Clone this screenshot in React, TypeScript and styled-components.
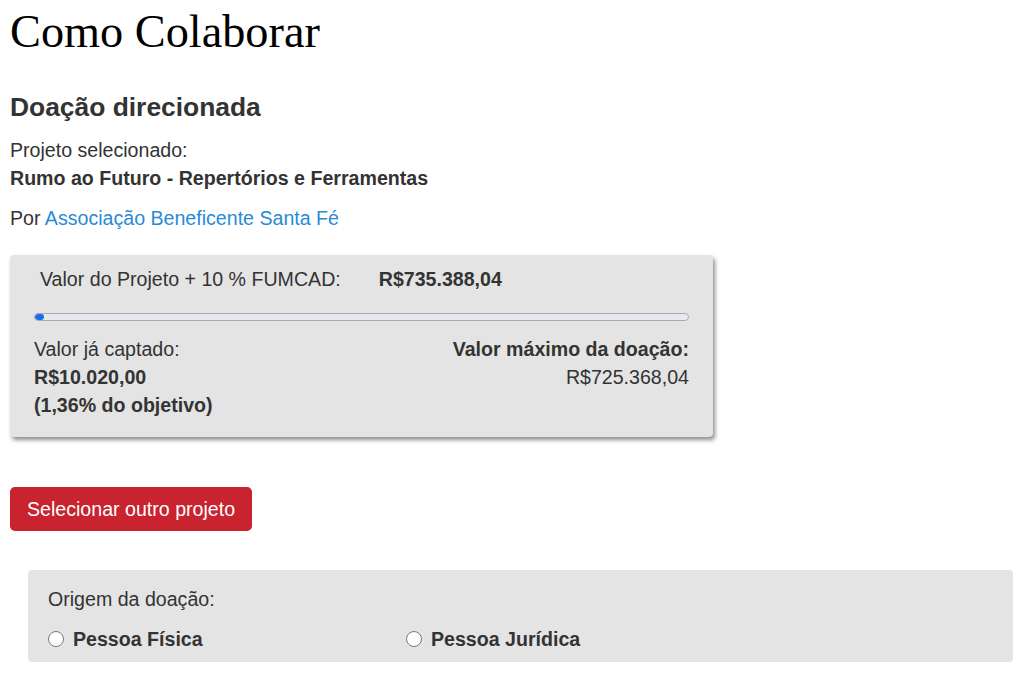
import styled, { createGlobalStyle } from "styled-components";

const GlobalStyle = createGlobalStyle`
  body {
    margin: 0;
    padding: 0 10px;
    background: #ffffff;
    font-family: "Liberation Sans", Arial, sans-serif;
    color: #333333;
  }
`;

const project = {
  name: "Rumo ao Futuro - Repertórios e Ferramentas",
  owner: "Associação Beneficente Santa Fé",
  total: "R$735.388,04",
  raised: "R$10.020,00",
  max: "R$725.368,04",
  percent: 1.36,
};

export default function App() {
  return (
    <>
      <GlobalStyle />
      <SCPage>
        <SCTitle>Como Colaborar</SCTitle>
        <SCSubtitle>Doação direcionada</SCSubtitle>
        <SCText>Projeto selecionado:</SCText>
        <SCText $bold>{project.name}</SCText>
        <SCOwner>
          Por <a href="#">{project.owner}</a>
        </SCOwner>

        <SCCard>
          <SCTotalRow>
            <span>Valor do Projeto + 10 % FUMCAD:</span>
            <strong>{project.total}</strong>
          </SCTotalRow>
          <SCProgress>
            <SCProgressFill style={{ width: `${project.percent}%` }} />
          </SCProgress>
          <SCValues>
            <div>
              <SCText>Valor já captado:</SCText>
              <SCText $bold>{project.raised}</SCText>
              <SCText $bold>({String(project.percent).replace(".", ",")}% do objetivo)</SCText>
            </div>
            <SCRight>
              <SCText $bold>Valor máximo da doação:</SCText>
              <SCText>{project.max}</SCText>
            </SCRight>
          </SCValues>
        </SCCard>

        <SCButton>Selecionar outro projeto</SCButton>

        <SCOrigin>
          <SCText>Origem da doação:</SCText>
          <SCRadios>
            <SCRadioLabel>
              <input type="radio" name="origem" />
              Pessoa Física
            </SCRadioLabel>
            <SCRadioLabel>
              <input type="radio" name="origem" />
              Pessoa Jurídica
            </SCRadioLabel>
          </SCRadios>
        </SCOrigin>
      </SCPage>
    </>
  );
}

const SCPage = styled.div`
  display: flex;
  flex-direction: column;
  align-items: flex-start;
`;

const SCTitle = styled.h1`
  margin: 4px 0 0;
  font-family: "Liberation Serif", "Times New Roman", serif;
  font-weight: 400;
  font-size: 46.3px;
  line-height: 56px;
  color: #000000;
`;

const SCSubtitle = styled.h2`
  margin: 32px 0 14px;
  font-size: 26.4px;
  line-height: 30px;
  font-weight: 700;
`;

const SCText = styled.div<{ $bold?: boolean }>`
  font-size: 19.6px;
  line-height: 28px;
  font-weight: ${(p) => (p.$bold ? 700 : 400)};
`;

const SCOwner = styled.div`
  margin-top: 12px;
  font-size: 19.6px;
  line-height: 28px;

  a {
    color: #2a8ad6;
    text-decoration: none;
  }
`;

const SCCard = styled.div`
  box-sizing: border-box;
  width: 703px;
  margin-top: 23px;
  padding: 10px 24px 18px;
  background: #e4e4e4;
  border-radius: 4px;
  box-shadow: 2px 3px 4px rgba(0, 0, 0, 0.45);
`;

const SCTotalRow = styled.div`
  display: flex;
  gap: 38px;
  padding-left: 6px;
  font-size: 19.6px;
  line-height: 28px;
`;

const SCProgress = styled.div`
  box-sizing: border-box;
  height: 8px;
  margin: 20px 0 14px;
  background: #e8e8ef;
  border: 1px solid #a9a9b2;
  border-radius: 4px;
  overflow: hidden;
`;

const SCProgressFill = styled.div`
  height: 100%;
  min-width: 5px;
  background: #1a6fe6;
  border-radius: 4px;
`;

const SCValues = styled.div`
  display: flex;
  justify-content: space-between;
`;

const SCRight = styled.div`
  text-align: right;
`;

const SCButton = styled.button`
  margin-top: 50px;
  height: 44px;
  padding: 0 17px;
  border: none;
  border-radius: 5px;
  background: #c8232f;
  color: #ffffff;
  font-family: "Liberation Sans", Arial, sans-serif;
  font-size: 19.6px;
  cursor: pointer;
`;

const SCOrigin = styled.div`
  box-sizing: border-box;
  align-self: stretch;
  margin: 39px 1px 0 18px;
  padding: 15px 20px 9px;
  background: #e4e4e4;
  border-radius: 4px;
`;

const SCRadios = styled.div`
  display: grid;
  grid-template-columns: 358px auto;
  margin-top: 12px;
`;

const SCRadioLabel = styled.label`
  display: flex;
  align-items: center;
  gap: 9px;
  font-size: 19.6px;
  line-height: 28px;
  font-weight: 700;

  input {
    margin: 0;
    width: 16px;
    height: 16px;
  }
`;
